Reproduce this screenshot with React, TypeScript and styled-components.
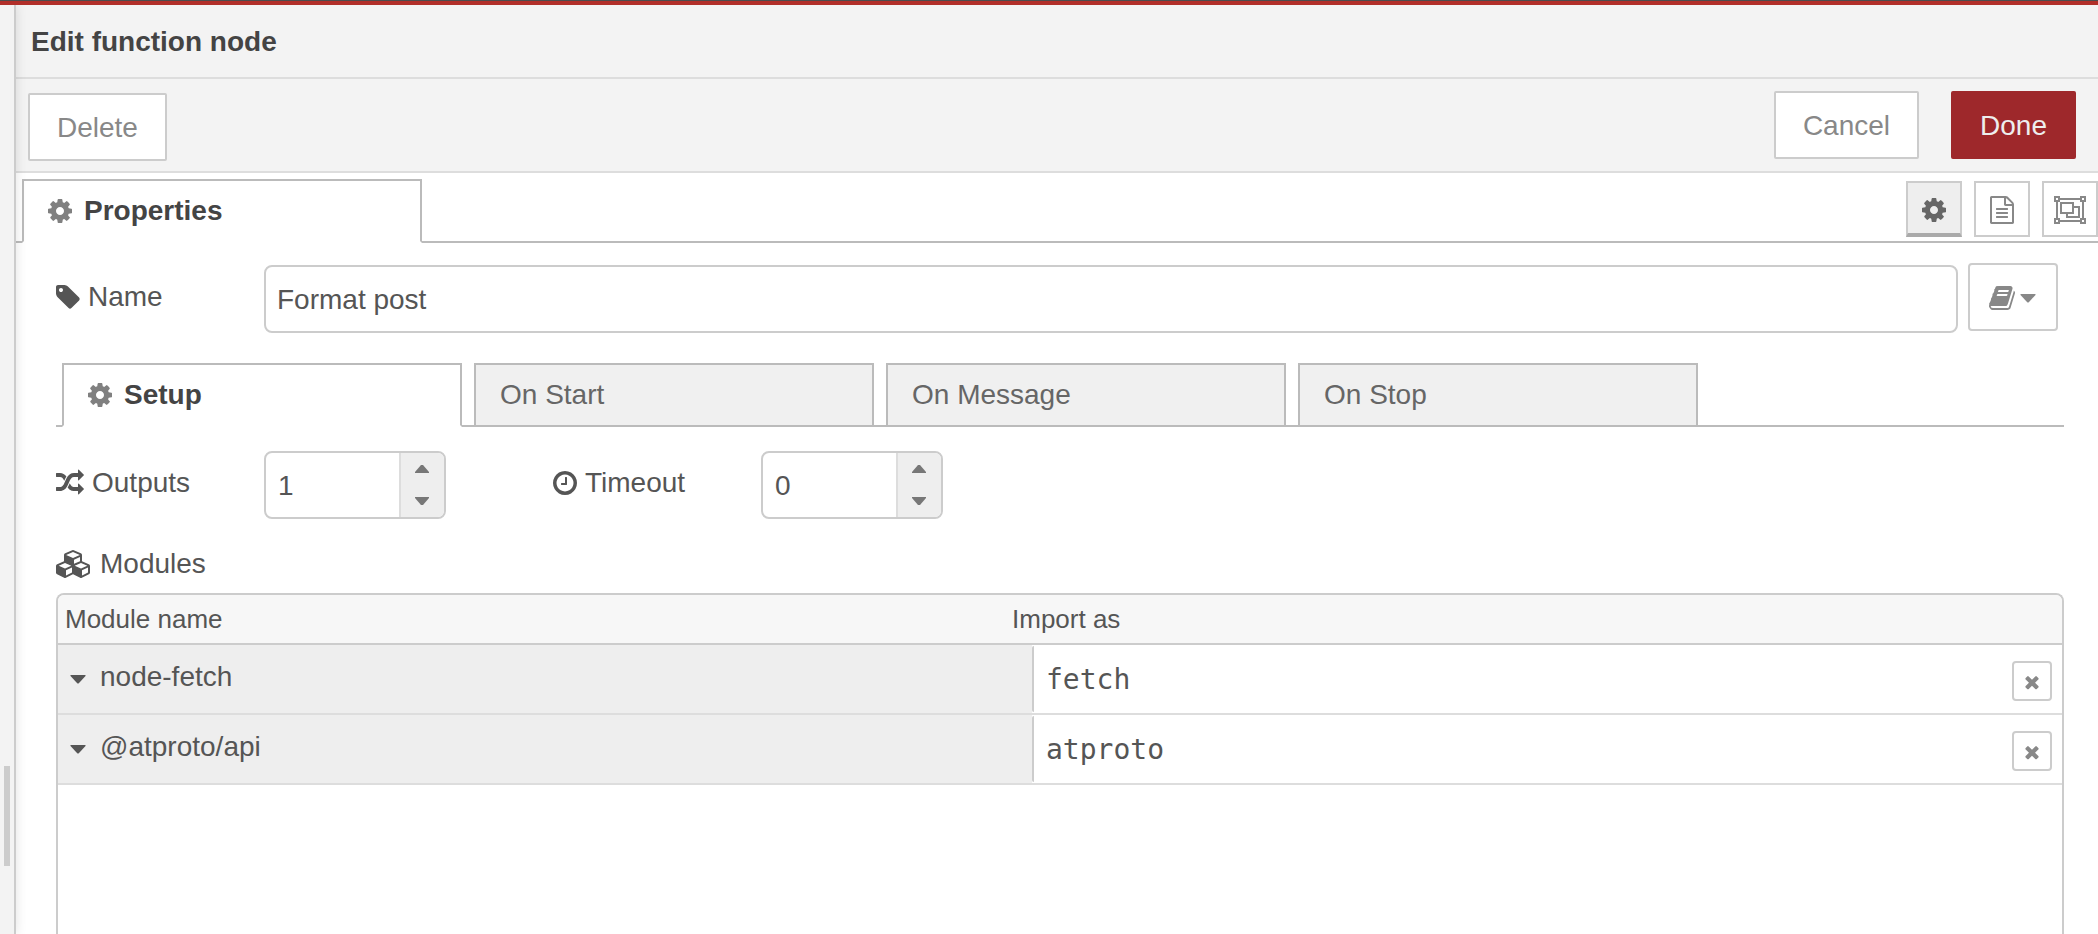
import React, { useState } from "react";
import styled, { createGlobalStyle, css } from "styled-components";

const GlobalStyle = createGlobalStyle`
  *, *::before, *::after { box-sizing: border-box; }
  html { overflow: hidden; }
  body {
    margin: 0;
    background: #fff;
    color: #555;
    font-family: "Liberation Sans", Arial, sans-serif;
    font-size: 28px;
    line-height: 32px;
  }
  button, input { font: inherit; color: inherit; margin: 0; }
  button { cursor: pointer; }
`;

/* ---------- icons ---------- */

const Svg = styled.svg`
  display: block;
  flex: none;
  fill: currentColor;
`;

const CogIcon = () => (
  <Svg width="24" height="28" viewBox="128 0 1536 1792" aria-hidden="true">
    <path d="M1152 896q0-106-75-181t-181-75-181 75-75 181 75 181 181 75 181-75 75-181zm512-109v222q0 12-8 23t-20 13l-185 28q-19 54-39 91 35 50 107 138 10 12 10 25t-9 23q-27 37-99 108t-94 71q-12 0-26-9l-138-108q-44 23-91 38-16 136-29 186-7 28-36 28h-222q-14 0-24.5-8.5t-11.5-21.5l-28-184q-49-16-90-37l-141 107q-10 9-25 9-14 0-25-11-126-114-165-168-7-10-7-23 0-12 8-23 15-21 51-66.5t54-70.5q-27-50-41-99l-183-27q-13-2-21-12.5t-8-23.5v-222q0-12 8-23t19-13l186-28q14-46 39-92-40-57-107-138-10-12-10-24 0-10 9-23 26-36 98.5-107.5t94.5-71.5q13 0 26 10l138 107q44-23 91-38 16-136 29-186 7-28 36-28h222q14 0 24.5 8.5t11.5 21.5l28 184q49 16 90 37l142-107q9-9 24-9 13 0 25 10 129 119 165 170 7 8 7 22 0 12-8 23-15 21-51 66.5t-54 70.5q26 50 41 98l183 28q13 2 21 12.5t8 23.5z" />
  </Svg>
);

const TagIcon = () => (
  <Svg width="24" height="28" viewBox="128 0 1536 1792" aria-hidden="true">
    <path d="M576 448q0-53-37.5-90.5t-90.5-37.5-90.5 37.5-37.5 90.5 37.5 90.5 90.5 37.5 90.5-37.5 37.5-90.5zm1067 576q0 53-37 90l-491 492q-39 37-91 37-53 0-90-37l-715-716q-38-37-64.5-101t-26.5-117v-416q0-52 38-90t90-38h416q53 0 117 26.5t102 64.5l715 714q37 39 37 91z" />
  </Svg>
);

const RandomIcon = () => (
  <Svg width="28" height="28" viewBox="0 0 1792 1792" aria-hidden="true">
    <path d="M666 481q-60 92-137 273-22-45-37-72.5t-40.5-63.5-51-56.5-63-35-81.5-14.5h-224q-14 0-23-9t-9-23v-192q0-14 9-23t23-9h224q250 0 410 225zm1126 799q0 14-9 23l-320 320q-9 9-23 9-13 0-22.5-9.5t-9.5-22.5v-192q-32 0-85 .5t-81 1-73-1-71-5-64-10.5-63-18.5-58-28.5-59-40-55-53.5-56-69.5q59-93 136-273 22 45 37 72.5t40.5 63.5 51 56.5 63 35 81.5 14.5h256v-192q0-14 9-23t23-9q12 0 24 10l319 319q9 9 9 23zm0-896q0 14-9 23l-320 320q-9 9-23 9-13 0-22.5-9.5t-9.5-22.5v-192h-256q-48 0-87 15t-69 45-51 61.5-45 77.5q-32 62-78 171-29 66-49.5 111t-54 105-64 100-74 83-90 68.5-106.5 42-128 16.5h-224q-14 0-23-9t-9-23v-192q0-14 9-23t23-9h224q48 0 87-15t69-45 51-61.5 45-77.5q32-62 78-171 29-66 49.5-111t54-105 64-100 74-83 90-68.5 106.5-42 128-16.5h256v-192q0-14 9-23t23-9q12 0 24 10l319 319q9 9 9 23z" />
  </Svg>
);

const ClockIcon = () => (
  <Svg width="24" height="28" viewBox="128 0 1536 1792" aria-hidden="true">
    <path d="M1024 544v448q0 14-9 23t-23 9h-320q-14 0-23-9t-9-23v-64q0-14 9-23t23-9h224v-352q0-14 9-23t23-9h64q14 0 23 9t9 23zm416 352q0-148-73-273t-198-198-273-73-273 73-198 198-73 273 73 273 198 198 273 73 273-73 198-198 73-273zm224 0q0 209-103 385.5t-279.5 279.5-385.5 103-385.5-103-279.5-279.5-103-385.5 103-385.5 279.5-279.5 385.5-103 385.5 103 279.5 279.5 103 385.5z" />
  </Svg>
);

const CubesIcon = () => (
  <Svg width="36" height="28" viewBox="0 0 2304 1792" aria-hidden="true">
    <path d="M640 1632l384-192v-314l-384 164v342zm-64-454l404-173-404-173-404 173zm1088 454l384-192v-314l-384 164v342zm-64-454l404-173-404-173-404 173zm-448-293l384-165v-266l-384 164v267zm-64-379l441-189-441-189-441 189zm1088 518v416q0 36-19 67t-52 47l-448 224q-25 14-57 14t-57-14l-448-224q-4-2-7-4-2 2-7 4l-448 224q-25 14-57 14t-57-14l-448-224q-33-16-52-47t-19-67v-416q0-38 21.5-70t56.5-48l434-186v-400q0-38 21.5-70t56.5-48l448-192q23-10 50-10t50 10l448 192q35 16 56.5 48t21.5 70v400l434 186q36 16 57 48t21 70z" />
  </Svg>
);

const FileTextIcon = () => (
  <Svg width="24" height="28" viewBox="128 0 1536 1792" aria-hidden="true">
    <path d="M1596 380q28 28 48 76t20 88v1152q0 40-28 68t-68 28h-1344q-40 0-68-28t-28-68v-1600q0-40 28-68t68-28h896q40 0 88 20t76 48zm-444-244v376h376q-10-29-22-41l-313-313q-12-12-41-22zm384 1528v-1024h-416q-40 0-68-28t-28-68v-416h-768v1536h1280zm-1024-864q0-14 9-23t23-9h704q14 0 23 9t9 23v64q0 14-9 23t-23 9h-704q-14 0-23-9t-9-23v-64zm736 224q14 0 23 9t9 23v64q0 14-9 23t-23 9h-704q-14 0-23-9t-9-23v-64q0-14 9-23t23-9h704zm0 256q14 0 23 9t9 23v64q0 14-9 23t-23 9h-704q-14 0-23-9t-9-23v-64q0-14 9-23t23-9h704z" />
  </Svg>
);

const OutlineSvg = styled(Svg)`
  fill: none;
  stroke: currentColor;
  stroke-width: 2;
`;

const ObjectGroupIcon = () => (
  <OutlineSvg width="32" height="28" viewBox="0 0 32 28" aria-hidden="true">
    <path d="M6 3h20M6 25h20M3 6v16M29 6v16" />
    <path d="M1 1h4v4H1zM27 1h4v4h-4zM1 23h4v4H1zM27 23h4v4h-4z" />
    <path d="M7 7h12v10H7z" />
    <path d="M19 11h6v10H13v-4" />
  </OutlineSvg>
);

const BookIcon = () => (
  <Svg width="26" height="28" viewBox="64 0 1664 1792" aria-hidden="true">
    <path d="M1703 478q40 57 18 129l-275 906q-19 64-76.5 107.5t-122.5 43.5h-923q-77 0-148.5-53.5t-99.5-131.5q-24-67-2-127 0-4 3-27t4-37q1-8-3-21.5t-3-19.5q2-11 8-21t16.5-23.5 16.5-23.5q23-38 45-91.5t30-91.5q3-10 .5-30t-.5-28q3-11 17-28t17-23q21-36 42-92t25-90q1-9-2.5-32t.5-28q4-13 22-30.5t22-22.5q19-26 42.5-84.5t27.5-96.5q1-8-3-25.5t-2-26.5q2-8 9-18t18-23 17-21q8-12 16.5-30.5t15-35 16-36 19.5-32 26.5-23.5 36-11.5 47.5 5.5l-1 3q38-9 51-9h761q74 0 114 56t18 130l-274 906q-36 119-71.5 153.5t-128.5 34.5h-869q-27 0-38 15-11 16-1 43 24 70 144 70h923q29 0 56-15.5t35-41.5l300-987q7-22 5-57 38 15 59 43zm-1064 2q-4 13 2 22.5t20 9.5h608q13 0 25.5-9.5t16.5-22.5l21-64q4-13-2-22.5t-20-9.5h-608q-13 0-25.5 9.5t-16.5 22.5zm-83 256q-4 13 2 22.5t20 9.5h608q13 0 25.5-9.5t16.5-22.5l21-64q4-13-2-22.5t-20-9.5h-608q-13 0-25.5 9.5t-16.5 22.5z" />
  </Svg>
);

const TimesIcon = () => (
  <Svg width="20" height="20" viewBox="0 0 1792 1792" aria-hidden="true">
    <path d="M1490 1322q0 40-28 68l-136 136q-28 28-68 28t-68-28l-294-294-294 294q-28 28-68 28t-68-28l-136-136q-28-28-28-68t28-68l294-294-294-294q-28-28-28-68t28-68l136-136q28-28 68-28t68 28l294 294 294-294q28-28 68-28t68 28l136 136q28 28 28 68t-28 68l-294 294 294 294q28 28 28 68z" />
  </Svg>
);

const CaretIcon = () => (
  <Svg width="16" height="9" viewBox="0 0 16 9" aria-hidden="true">
    <path d="M1 0Q0 0 0.5 1L7 8Q8 9 9 8L15.500 1Q16 0 15 0z" />
  </Svg>
);

const StepArrow = ({ up = false }: { up?: boolean }) => (
  <Svg width="14" height="8" viewBox="0 0 14 8" aria-hidden="true">
    <path d={up ? "M0 8V7L6 0H8L14 7V8z" : "M0 0V1L6 8H8L14 1V0z"} />
  </Svg>
);

/* ---------- shell ---------- */

const Page = styled.div`
  height: 100vh;
  display: flex;
  flex-direction: column;
  overflow: hidden;
  border-top: 1px solid #4c4c4c;
`;

const AppHeaderEdge = styled.div`
  flex: none;
  height: 4px;
  background: #b12f29;
`;

const Workspace = styled.div`
  flex: 1;
  min-height: 0;
  display: flex;
  overflow: hidden;
`;

const ResizeBar = styled.div`
  position: relative;
  z-index: 1;
  flex: none;
  width: 16px;
  display: flex;
  align-items: flex-end;
  padding: 0 4px 68px;
  background: #f3f3f3;
  border-right: 2px solid #ccc;
  box-shadow: 0 0 12px rgba(0, 0, 0, 0.12);
`;

const Grip = styled.span`
  width: 6px;
  height: 100px;
  background: #ccc;
`;

const Tray = styled.main`
  flex: 1;
  min-width: 0;
  display: flex;
  flex-direction: column;
  background: #fff;
`;

const TitleBar = styled.header`
  flex: none;
  height: 74px;
  display: flex;
  align-items: center;
  padding: 2px 15px 0;
  background: #f3f3f3;
  border-bottom: 2px solid #ddd;
`;

const Title = styled.h1`
  margin: 0;
  font-size: 28px;
  line-height: 32px;
  font-weight: bold;
  color: #444;
`;

const Toolbar = styled.div`
  flex: none;
  height: 94px;
  display: flex;
  justify-content: space-between;
  padding: 12px 22px 10px 12px;
  background: #f3f3f3;
  border-bottom: 2px solid #ddd;
`;

const ButtonGroup = styled.div<{ $lowered?: boolean }>`
  display: flex;
  align-items: ${(p) => (p.$lowered ? "flex-end" : "flex-start")};
  gap: 32px;
`;

const ActionButton = styled.button<{ $primary?: boolean }>`
  height: 68px;
  padding: 2px 27px 0;
  background: #fff;
  color: #888;
  border: 2px solid #ccc;
  border-radius: 2px;
  ${(p) =>
    p.$primary &&
    css`
      background: #9e282b;
      border-color: #9e282b;
      color: #eee;
    `}
`;

/* ---------- tabs ---------- */

const TabBar = styled.div`
  flex: none;
  display: flex;
  justify-content: space-between;
  padding-left: 6px;
  border-bottom: 2px solid #bbb;
`;

const TrayTabBar = styled(TabBar)`
  padding-top: 6px;
`;

const TabList = styled.div`
  display: flex;
  gap: 12px;
  margin-bottom: -2px;
`;

const Tab = styled.button<{ $active?: boolean }>`
  width: 400px;
  height: 64px;
  display: flex;
  align-items: center;
  gap: 12px;
  padding: 0 24px;
  text-align: left;
  background: #f0f0f0;
  color: #666;
  border: 2px solid #bbb;
  border-radius: 0;
  ${(p) =>
    p.$active &&
    css`
      background: #fff;
      color: #444;
      font-weight: bold;
      border-bottom-color: #fff;
      svg {
        color: #808080;
      }
    `}
`;

const TabTools = styled.div`
  display: flex;
  gap: 12px;
  padding-top: 2px;
`;

const ToolButton = styled.button<{ $active?: boolean }>`
  width: 56px;
  height: 56px;
  display: flex;
  align-items: center;
  justify-content: center;
  padding: 2px 0 0;
  background: #fff;
  color: #888;
  border: 2px solid #ccc;
  ${(p) =>
    p.$active &&
    css`
      padding-top: 4px;
      background: #eee;
      color: #666;
      border-bottom: 4px solid #aaa;
    `}
`;

/* ---------- form ---------- */

const Form = styled.form`
  flex: 1;
  min-height: 0;
  display: flex;
  flex-direction: column;
  padding: 20px 34px 0 40px;
`;

const FormRow = styled.div`
  flex: none;
  display: flex;
  align-items: flex-start;
`;

const NameRow = styled(FormRow)`
  padding-right: 6px;
  margin-bottom: 30px;
`;

const SetupRow = styled(FormRow)`
  margin: 22px 0 16px;
`;

const Label = styled.label`
  flex: none;
  width: 208px;
  height: 68px;
  display: flex;
  align-items: center;
  gap: 8px;
`;

const ModulesHeading = styled.h2`
  flex: none;
  height: 58px;
  display: flex;
  align-items: center;
  gap: 8px;
  margin: 0;
  font-size: 28px;
  font-weight: normal;
`;

const field = css`
  height: 68px;
  margin-top: 2px;
  background: #fff;
  border: 2px solid #ccc;
  border-radius: 8px;
`;

const TextInput = styled.input`
  ${field}
  flex: 1;
  min-width: 0;
  padding: 2px 11px 0;
  outline: none;
`;

const LibraryButton = styled.button`
  flex: none;
  width: 90px;
  height: 68px;
  display: flex;
  align-items: center;
  justify-content: center;
  gap: 5px;
  margin-left: 10px;
  padding: 2px 2px 0 0;
  background: #fff;
  color: #888;
  border: 2px solid #ccc;
  border-radius: 4px;
`;

const SpinnerBox = styled.div`
  ${field}
  flex: none;
  width: 182px;
  display: flex;
  overflow: hidden;
  margin-right: 107px;
`;

const NumberInput = styled.input`
  flex: 1;
  min-width: 0;
  padding: 2px 12px 0;
  border: 0;
  outline: none;
  background: transparent;
  appearance: textfield;
  &::-webkit-inner-spin-button,
  &::-webkit-outer-spin-button {
    appearance: none;
    margin: 0;
  }
`;

const SpinnerButtons = styled.div`
  width: 45px;
  display: flex;
  flex-direction: column;
  background: #eee;
  border-left: 2px solid #ddd;
`;

const StepButton = styled.button`
  flex: 1;
  display: flex;
  align-items: center;
  justify-content: center;
  padding: 0 1px 0 0;
  background: transparent;
  color: #777;
  border: 0;
`;

/* ---------- module list ---------- */

const ModuleBox = styled.div`
  flex: 1;
  min-height: 0;
  border: 2px solid #ccc;
  border-bottom: 0;
  border-radius: 8px 8px 0 0;
  overflow: hidden;
`;

const ModuleTable = styled.table`
  display: block;
  width: 100%;
`;

const TableHead = styled.thead`
  display: block;
  background: #f7f7f7;
  border-bottom: 2px solid #ccc;
`;

const TableBody = styled.tbody`
  display: block;
`;

const HeadRow = styled.tr`
  display: grid;
  grid-template-columns: calc(50% - 48px) 1fr;
`;

const HeadCell = styled.th`
  padding: 8px 0 8px 7px;
  text-align: left;
  font-size: 26px;
  line-height: 32px;
  font-weight: normal;

  & + & {
    padding-left: 0;
  }
`;

const ModuleRow = styled.tr`
  display: grid;
  grid-template-columns: calc(50% - 28px) 1fr;
  border-bottom: 2px solid #ddd;
`;

const ModuleCell = styled.td`
  height: 68px;
  padding: 0;
  background: #eee;
`;

const ModuleToggle = styled.button`
  width: 100%;
  height: 64px;
  display: flex;
  align-items: center;
  gap: 14px;
  padding: 0 12px;
  text-align: left;
  background: transparent;
  border: 0;

  svg {
    margin-top: 5px;
  }
`;

const ImportCell = styled.td`
  height: 68px;
  display: flex;
  align-items: center;
  padding: 0 10px 0 0;
`;

const ImportInput = styled.input`
  flex: 1;
  min-width: 0;
  height: 66px;
  padding: 0 12px;
  font-family: "DejaVu Sans Mono", monospace;
  background: transparent;
  border: 0;
  border-left: 2px solid #ccc;
  border-radius: 2px;
  outline: none;
`;

const RemoveButton = styled.button`
  width: 40px;
  height: 40px;
  display: flex;
  align-items: center;
  justify-content: center;
  margin-top: 4px;
  padding: 2px 0 0;
  background: #fff;
  color: #888;
  border: 2px solid #ccc;
  border-radius: 4px;
`;

/* ---------- components ---------- */

interface SpinnerProps {
  id: string;
  initial: number;
}

function Spinner({ id, initial }: SpinnerProps) {
  const [value, setValue] = useState(initial);
  return (
    <SpinnerBox>
      <NumberInput
        id={id}
        type="number"
        min={0}
        value={value}
        onChange={(e) => setValue(Number(e.target.value))}
      />
      <SpinnerButtons>
        <StepButton type="button" aria-label="Increase" onClick={() => setValue(value + 1)}>
          <StepArrow up />
        </StepButton>
        <StepButton type="button" aria-label="Decrease" onClick={() => setValue(Math.max(0, value - 1))}>
          <StepArrow />
        </StepButton>
      </SpinnerButtons>
    </SpinnerBox>
  );
}

const TABS = ["Setup", "On Start", "On Message", "On Stop"];

const MODULES = [
  { name: "node-fetch", variable: "fetch" },
  { name: "@atproto/api", variable: "atproto" },
];

export default function App() {
  const [name, setName] = useState("Format post");
  const [tab, setTab] = useState("Setup");
  const [modules, setModules] = useState(MODULES);

  return (
    <Page>
      <GlobalStyle />
      <AppHeaderEdge />
      <Workspace>
        <ResizeBar>
          <Grip />
        </ResizeBar>
        <Tray>
          <TitleBar>
            <Title>Edit function node</Title>
          </TitleBar>
          <Toolbar>
            <ButtonGroup $lowered>
              <ActionButton type="button">Delete</ActionButton>
            </ButtonGroup>
            <ButtonGroup>
              <ActionButton type="button">Cancel</ActionButton>
              <ActionButton type="button" $primary>
                Done
              </ActionButton>
            </ButtonGroup>
          </Toolbar>
          <TrayTabBar>
            <TabList role="tablist">
              <Tab type="button" role="tab" aria-selected $active>
                <CogIcon />
                Properties
              </Tab>
            </TabList>
            <TabTools>
              <ToolButton type="button" aria-label="Properties" $active>
                <CogIcon />
              </ToolButton>
              <ToolButton type="button" aria-label="Description">
                <FileTextIcon />
              </ToolButton>
              <ToolButton type="button" aria-label="Appearance">
                <ObjectGroupIcon />
              </ToolButton>
            </TabTools>
          </TrayTabBar>
          <Form onSubmit={(e) => e.preventDefault()}>
            <NameRow>
              <Label htmlFor="node-name">
                <TagIcon />
                Name
              </Label>
              <TextInput
                id="node-name"
                type="text"
                value={name}
                onChange={(e) => setName(e.target.value)}
              />
              <LibraryButton type="button" aria-label="Library">
                <BookIcon />
                <CaretIcon />
              </LibraryButton>
            </NameRow>
            <TabBar>
              <TabList role="tablist">
                {TABS.map((label) => (
                  <Tab
                    key={label}
                    type="button"
                    role="tab"
                    aria-selected={tab === label}
                    $active={tab === label}
                    onClick={() => setTab(label)}
                  >
                    {label === "Setup" && <CogIcon />}
                    {label}
                  </Tab>
                ))}
              </TabList>
            </TabBar>
            <SetupRow>
              <Label htmlFor="node-outputs">
                <RandomIcon />
                Outputs
              </Label>
              <Spinner id="node-outputs" initial={1} />
              <Label htmlFor="node-timeout">
                <ClockIcon />
                Timeout
              </Label>
              <Spinner id="node-timeout" initial={0} />
            </SetupRow>
            <ModulesHeading>
              <CubesIcon />
              Modules
            </ModulesHeading>
            <ModuleBox>
              <ModuleTable>
                <TableHead>
                  <HeadRow>
                    <HeadCell scope="col">Module name</HeadCell>
                    <HeadCell scope="col">Import as</HeadCell>
                  </HeadRow>
                </TableHead>
                <TableBody>
                  {modules.map((m) => (
                    <ModuleRow key={m.name}>
                      <ModuleCell>
                        <ModuleToggle type="button">
                          <CaretIcon />
                          {m.name}
                        </ModuleToggle>
                      </ModuleCell>
                      <ImportCell>
                        <ImportInput
                          type="text"
                          aria-label={`Import ${m.name} as`}
                          defaultValue={m.variable}
                        />
                        <RemoveButton
                          type="button"
                          aria-label={`Remove ${m.name}`}
                          onClick={() => setModules(modules.filter((x) => x !== m))}
                        >
                          <TimesIcon />
                        </RemoveButton>
                      </ImportCell>
                    </ModuleRow>
                  ))}
                </TableBody>
              </ModuleTable>
            </ModuleBox>
          </Form>
        </Tray>
      </Workspace>
    </Page>
  );
}
